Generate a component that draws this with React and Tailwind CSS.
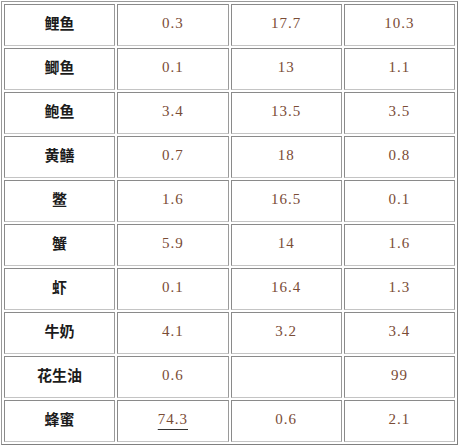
import React from "react";

const rows = [
  ["鲤鱼", "0.3", "17.7", "10.3"],
  ["鲫鱼", "0.1", "13", "1.1"],
  ["鲍鱼", "3.4", "13.5", "3.5"],
  ["黄鳝", "0.7", "18", "0.8"],
  ["鳖", "1.6", "16.5", "0.1"],
  ["蟹", "5.9", "14", "1.6"],
  ["虾", "0.1", "16.4", "1.3"],
  ["牛奶", "4.1", "3.2", "3.4"],
  ["花生油", "0.6", "", "99"],
  ["蜂蜜", "74.3", "0.6", "2.1"],
];

const cell =
  "h-[42px] flex items-center justify-center border border-[#8a8a8a] border-b-[#c4c4c4] border-r-[#9a9a9a] bg-white";

export default function App() {
  return (
    <div className="w-[460px] h-[447px] bg-white">
      <div className="ml-px mt-px w-[457px] border border-[#9a9a9a] border-b-[#808080] border-r-[#808080] p-[2px] grid grid-cols-4 gap-[2px] bg-white">
        {rows.map((r, i) => (
          <React.Fragment key={i}>
            <div className={cell}>
              <span
                className="text-[15px] font-semibold text-[#1c1c1c] pb-[3px]"
                style={{ fontFamily: '"Noto Sans CJK SC", "Noto Sans", sans-serif' }}
              >
                {r[0]}
              </span>
            </div>
            {r.slice(1).map((v, j) => (
              <div key={j} className={cell}>
                <span
                  className={
                    "text-[15px] tracking-[1px] text-[#7a4c36] pb-[3px] " +
                    (i === 9 && j === 0
                      ? "underline decoration-[#333] underline-offset-[5px]"
                      : "")
                  }
                  style={{ fontFamily: '"Liberation Serif", "Times New Roman", serif' }}
                >
                  {v}
                </span>
              </div>
            ))}
          </React.Fragment>
        ))}
      </div>
    </div>
  );
}
